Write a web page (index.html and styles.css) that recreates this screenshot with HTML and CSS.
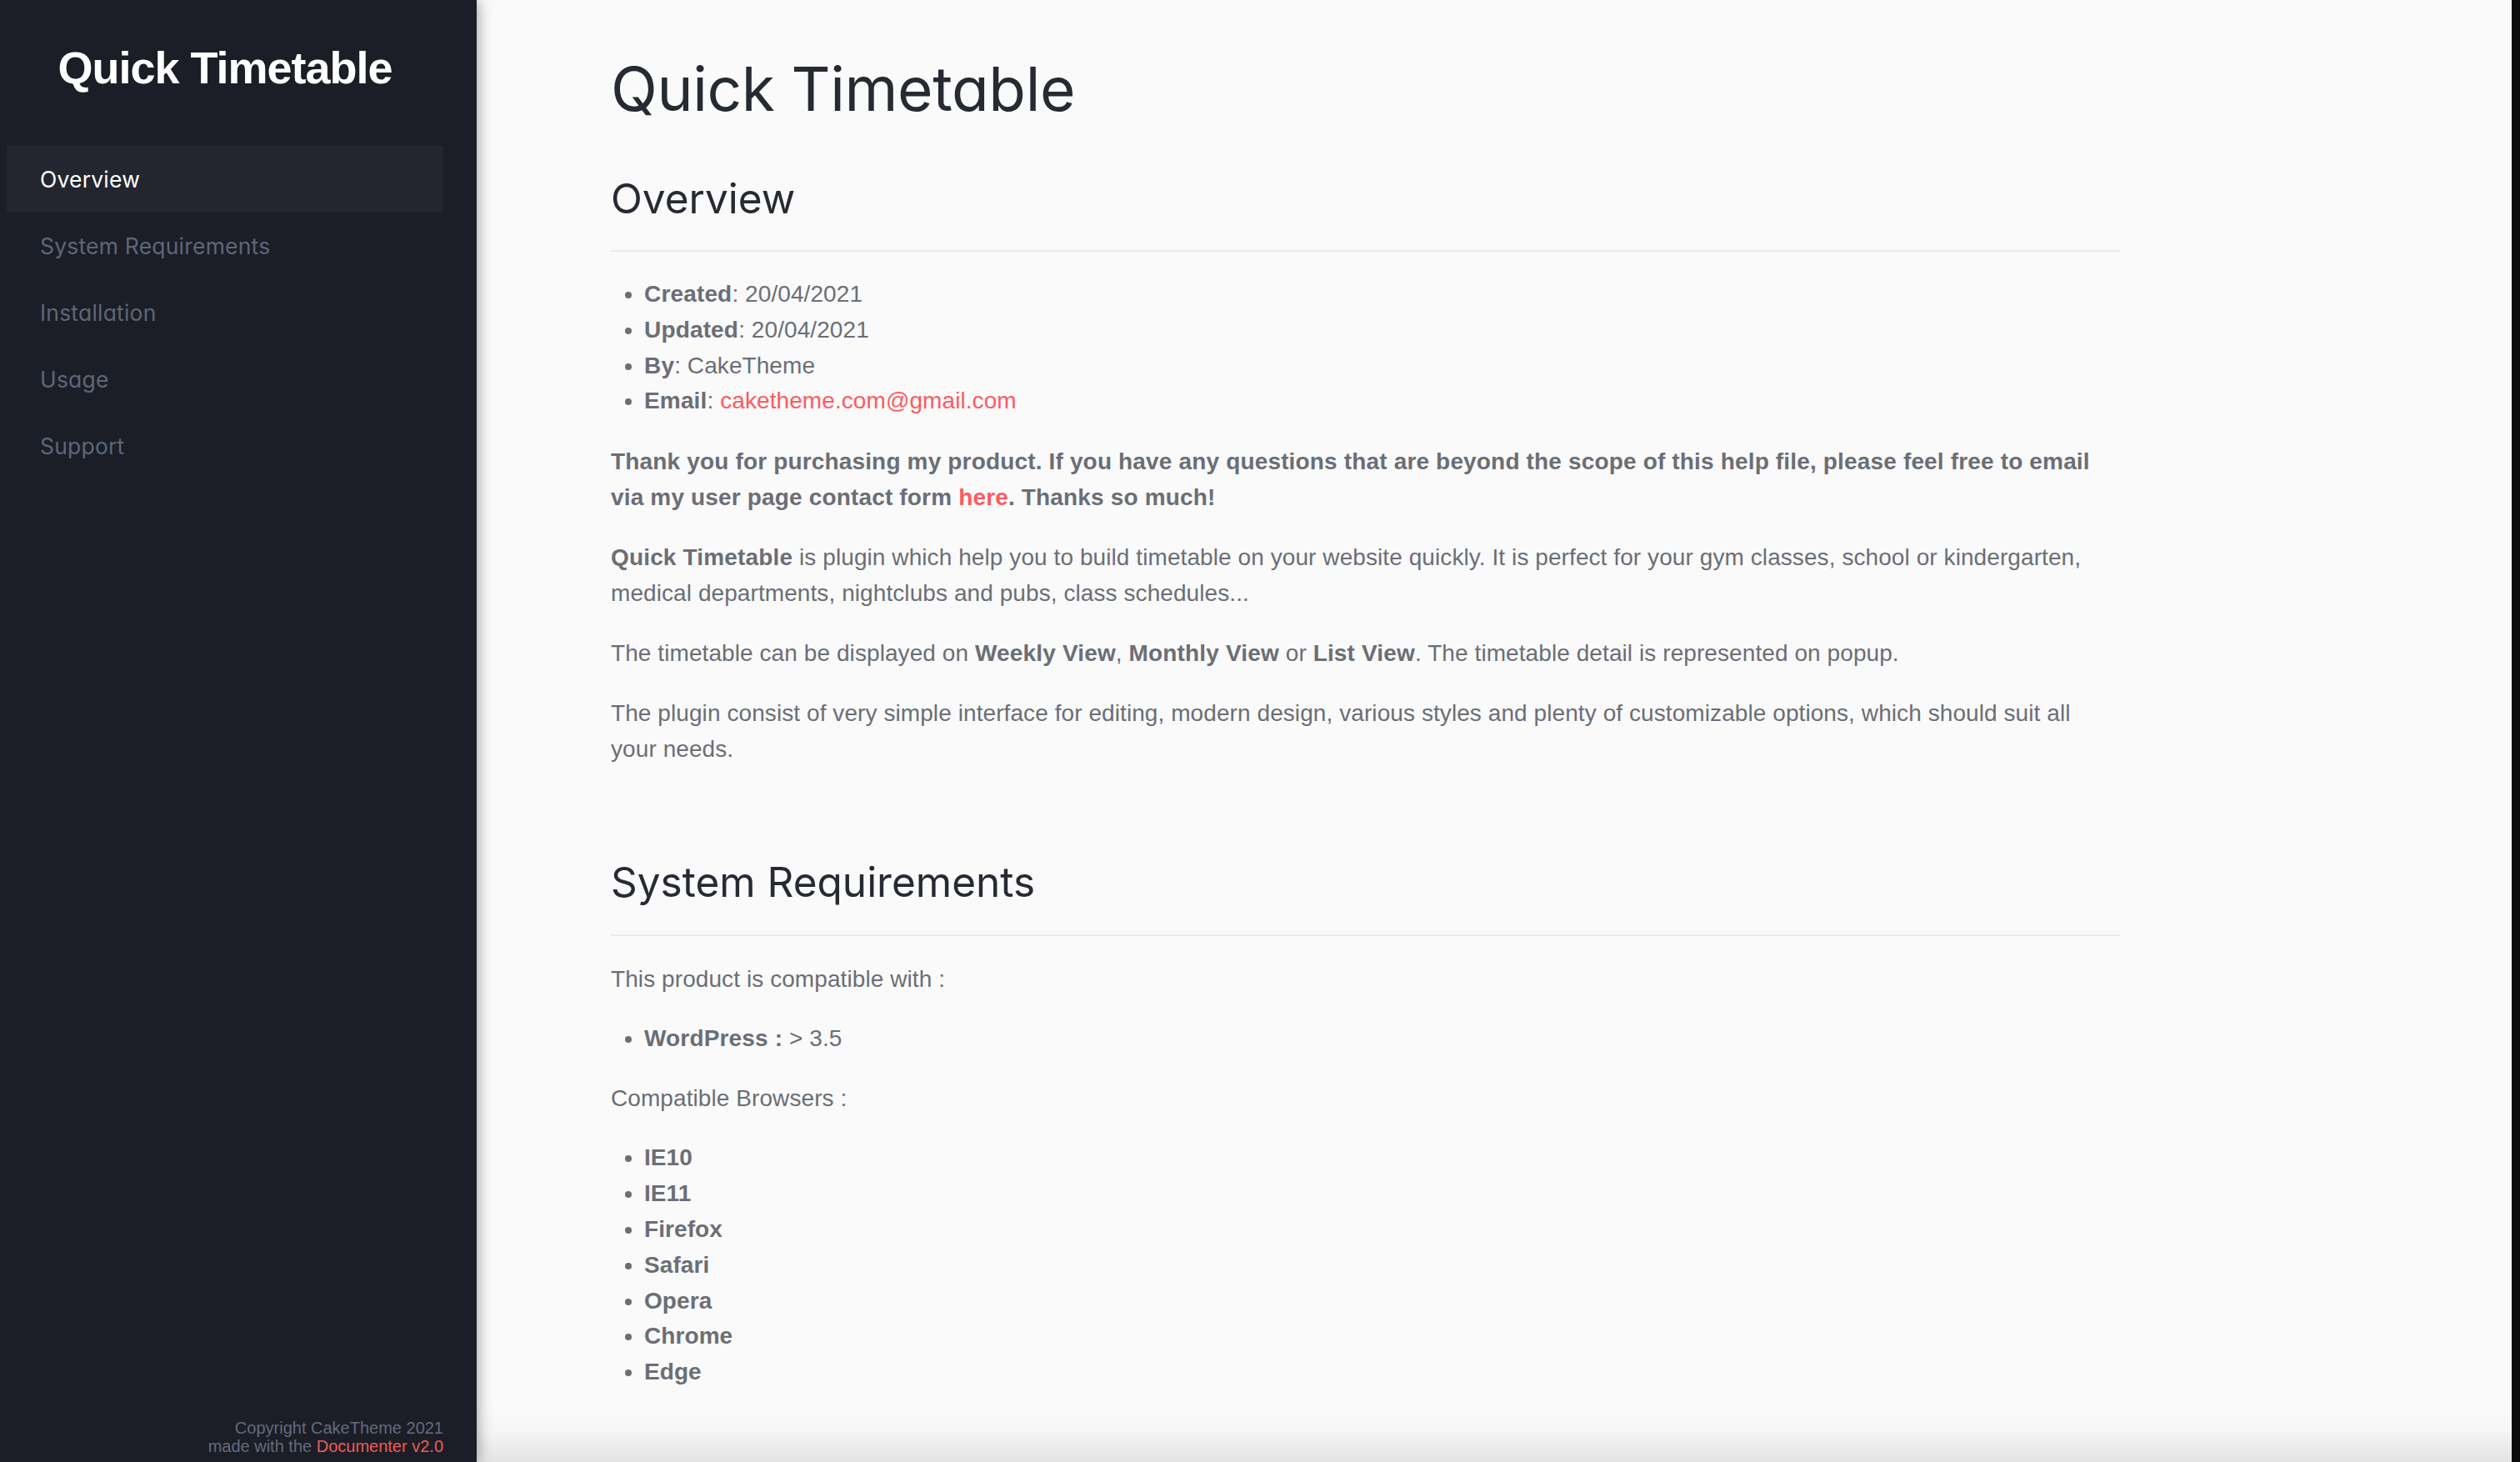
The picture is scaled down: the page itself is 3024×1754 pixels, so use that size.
FILE: index.html
```html
<!DOCTYPE html>
<html lang="en">
<head>
<meta charset="utf-8">
<title>Quick Timetable - Documentation</title>
<link rel="stylesheet" href="styles.css">
</head>
<body>
<div class="app">
  <aside class="sidebar">
    <div class="brand">Quick Timetable</div>
    <nav class="nav">
      <a class="nav-link active" href="#overview">Overview</a>
      <a class="nav-link" href="#requirements">System Requirements</a>
      <a class="nav-link" href="#installation">Installation</a>
      <a class="nav-link" href="#usage">Usage</a>
      <a class="nav-link" href="#support">Support</a>
    </nav>
    <div class="copyright">
      Copyright CakeTheme 2021<br>
      made with the <a href="#">Documenter v2.0</a>
    </div>
  </aside>
  <main class="main">
    <div class="content">
      <h1 class="title">Quick Timetable</h1>
      <section class="section" id="overview">
        <h2 class="section-title">Overview</h2>
        <ul class="list">
          <li><strong>Created</strong>: 20/04/2021</li>
          <li><strong>Updated</strong>: 20/04/2021</li>
          <li><strong>By</strong>: CakeTheme</li>
          <li><strong>Email</strong>: <a class="link" href="#">caketheme.com@gmail.com</a></li>
        </ul>
        <p class="text text-strong">Thank you for purchasing my product. If you have any questions that are beyond the scope of this help file, please feel free to email via my user page contact form <a class="link" href="#">here</a>. Thanks so much!</p>
        <p class="text"><strong>Quick Timetable</strong> is plugin which help you to build timetable on your website quickly. It is perfect for your gym classes, school or kindergarten, medical departments, nightclubs and pubs, class schedules...</p>
        <p class="text">The timetable can be displayed on <strong>Weekly View</strong>, <strong>Monthly View</strong> or <strong>List View</strong>. The timetable detail is represented on popup.</p>
        <p class="text">The plugin consist of very simple interface for editing, modern design, various styles and plenty of customizable options, which should suit all your needs.</p>
      </section>
      <section class="section" id="requirements">
        <h2 class="section-title">System Requirements</h2>
        <p class="text">This product is compatible with :</p>
        <ul class="list">
          <li><strong>WordPress :</strong> &gt; 3.5</li>
        </ul>
        <p class="text">Compatible Browsers :</p>
        <ul class="list list-bold">
          <li>IE10</li>
          <li>IE11</li>
          <li>Firefox</li>
          <li>Safari</li>
          <li>Opera</li>
          <li>Chrome</li>
          <li>Edge</li>
        </ul>
      </section>
    </div>
    <div class="bottom-fade"></div>
  </main>
  <div class="edge"></div>
</div>
</body>
</html>
```

FILE: styles.css
```css
html, body {
  margin: 0;
  padding: 0;
  height: 100%;
}

body {
  background: #fafafa;
  font-family: "Liberation Sans", Arial, sans-serif;
  overflow: hidden;
}

.app {
  display: flex;
  height: 1754px;
}

.sidebar {
  width: 572px;
  flex: 0 0 572px;
  box-sizing: border-box;
  padding: 54px 40px 8px 8px;
  background: #1b1e26;
  display: flex;
  flex-direction: column;
  box-shadow: 2px 0 16px rgba(0, 0, 0, 0.35);
  position: relative;
  z-index: 2;
}

.brand {
  color: #ffffff;
  font-family: "Liberation Sans", Arial, sans-serif;
  font-weight: 700;
  font-size: 54px;
  line-height: 54px;
  letter-spacing: -1px;
  text-align: center;
}

.nav {
  margin-top: 67px;
  display: flex;
  flex-direction: column;
}

.nav-link {
  display: block;
  height: 80px;
  line-height: 80px;
  padding-left: 40px;
  font-family: "Inter", "Noto Sans", sans-serif;
  font-feature-settings: "cv11" 1;
  font-size: 26.5px;
  color: #5e6679;
  text-decoration: none;
  letter-spacing: 0.2px;
}

.nav-link.active {
  background: #23262e;
  color: #ffffff;
}

.copyright {
  margin-top: auto;
  text-align: right;
  font-size: 20px;
  line-height: 22px;
  color: #636b7e;
}

.copyright a {
  color: #f05a5a;
  text-decoration: none;
}

.main {
  flex: 1 1 auto;
  position: relative;
  overflow: hidden;
  background: #fafafa;
}

.content {
  width: 1811px;
  padding: 63px 0 0 161px;
}

.title {
  margin: 0;
  font-family: "Inter", "Noto Sans", sans-serif;
  font-feature-settings: "cv11" 1;
  font-weight: 400;
  font-size: 73px;
  line-height: 1.2;
  color: #262a32;
  letter-spacing: -0.4px;
}

.section {
  margin-top: 58px;
}

.section + .section {
  margin-top: 109px;
}

.section-title {
  margin: 0 0 30px;
  padding-bottom: 32px;
  border-bottom: 2px solid #ebebeb;
  font-family: "Inter", "Noto Sans", sans-serif;
  font-feature-settings: "cv11" 1;
  font-weight: 400;
  font-size: 49.5px;
  line-height: 1.2;
  color: #262a32;
}

.text,
.list {
  margin: 0 0 29px;
  font-size: 28px;
  line-height: 43px;
  color: #6b6e76;
  letter-spacing: 0.08px;
}

.text-strong {
  font-weight: 700;
  letter-spacing: 0.16px;
}

.list {
  padding-left: 40px;
}

.list li {
  line-height: 42.8px;
}

.list-bold li {
  font-weight: 700;
}

strong {
  font-weight: 700;
  letter-spacing: 0.16px;
}

.link {
  color: #ff5a5f;
  text-decoration: none;
}

.bottom-fade {
  position: absolute;
  left: 0;
  right: 0;
  bottom: 0;
  height: 70px;
  background: linear-gradient(to bottom, rgba(0, 0, 0, 0) 0%, rgba(0, 0, 0, 0.015) 45%, rgba(0, 0, 0, 0.09) 100%);
  pointer-events: none;
}

.edge {
  flex: 0 0 10px;
  width: 10px;
  background: #0c0c0c;
}
```
